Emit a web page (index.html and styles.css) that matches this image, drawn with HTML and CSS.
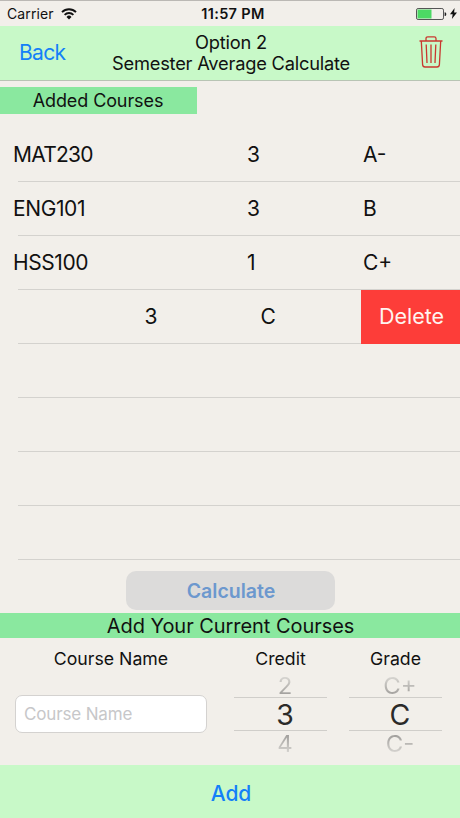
FILE: index.html
```html
<!DOCTYPE html>
<html lang="en">
<head>
<meta charset="utf-8">
<title>Semester Average Calculate</title>
<link rel="stylesheet" href="styles.css">
</head>
<body>
<div class="status">
  <div class="carrier"><span>Carrier</span>
    <svg class="wifi" viewBox="0 0 16 12"><g fill="none" stroke="#111" stroke-width="1.9"><path d="M1 4.1a10 10 0 0 1 14 0"/><path d="M3.6 6.9a6.2 6.2 0 0 1 8.8 0"/></g><path d="M8 11.5 5.5 8.9a3.5 3.5 0 0 1 5 0z" fill="#111"/></svg>
  </div>
  <div class="time">11:57 PM</div>
  <div class="power">
    <svg class="battery" viewBox="0 0 31 12"><rect x=".5" y=".5" width="27" height="11" rx="1.6" fill="none" stroke="#555"/><rect x="1.5" y="1.5" width="14" height="9" fill="#4cd964"/><path d="M28.6 4.2c2.3 0 2.3 3.8 0 3.8z" fill="#222"/></svg>
    <svg class="bolt" viewBox="0 0 7 11"><path d="M4.6 0 0 6.3h2.7L1.9 11 7 4.5H4.1z" fill="#111"/></svg>
  </div>
</div>
<header class="nav">
  <a class="back">Back</a>
  <h1 class="title"><span class="title-top">Option 2</span><span class="title-main">Semester Average Calculate</span></h1>
  <svg class="trash" viewBox="0 0 24 32" fill="none" stroke="#c9382f" stroke-width="1.3"><path d="M.5 5h23M7 5V2.6Q7 .8 8.8.8h6.4Q17 .8 17 2.600V5M2.300 5 3.600 28.600Q3.800 31 6 31h12q2.200 0 2.400-2.400L21.700 5M7.200 8.500l.8 18.500M12 8.500V27M16.800 8.500 16 27"/></svg>
</header>
<div class="badge"><span>Added Courses</span></div>
<main class="list">
  <div class="row"><span class="name wide">MAT230</span><span class="credit">3</span><span class="grade">A-</span></div>
  <div class="row"><span class="name">ENG101</span><span class="credit">3</span><span class="grade">B</span></div>
  <div class="row"><span class="name">HSS100</span><span class="credit">1</span><span class="grade">C+</span></div>
  <div class="row swiped"><span class="name"></span><span class="credit">3</span><span class="grade">C</span><button class="delete"><span>Delete</span></button></div>
  <div class="row"></div>
  <div class="row"></div>
  <div class="row"></div>
  <div class="row"></div>
</main>
<button class="calculate"><span>Calculate</span></button>
<h2 class="band"><span>Add Your Current Courses</span></h2>
<section class="form">
  <div class="field"><label>Course Name</label><div class="input"><span>Course Name</span></div></div>
  <div class="field"><label>Credit</label>
    <div class="picker"><div class="opt far up"><span>2</span></div><div class="opt sel"><span>3</span></div><div class="opt far down"><span>4</span></div></div></div>
  <div class="field"><label>Grade</label>
    <div class="picker"><div class="opt far up"><span>C+</span></div><div class="opt sel"><span>C</span></div><div class="opt far down"><span>C-</span></div></div></div>
</section>
<button class="add"><span>Add</span></button>
</body>
</html>
```
FILE: styles.css
```css
* { box-sizing: border-box; }
body {
  margin: 0;
  width: 460px;
  height: 818px;
  overflow: hidden;
  display: flex;
  flex-direction: column;
  background: #f2efea;
  color: #111;
  font-family: Inter, "Liberation Sans", sans-serif;
  font-size: 21px;
}
button { border: 0; padding: 0; font-family: inherit; }
h1, h2 { margin: 0; font-weight: 400; }
svg { display: block; }

.status {
  height: 26px;
  flex: none;
  border-top: 1px solid #bbb8b4;
  padding: 0 3px 0 7px;
  display: grid;
  grid-template-columns: 1fr auto 1fr;
  align-items: center;
  font-size: 14px;
}
.carrier { display: flex; align-items: center; gap: 7px; letter-spacing: .1px; }
.wifi { width: 16px; height: 12px; }
.time { font-weight: 600; font-size: 14.5px; letter-spacing: .35px; padding-left: 2px; }
.power { display: flex; justify-content: flex-end; align-items: center; gap: 3px; }
.battery { width: 31px; height: 12px; }
.bolt { width: 7px; height: 11px; }

.nav {
  height: 55px;
  flex: none;
  background: #c8f9c8;
  border-bottom: 1px solid #b8c4b4;
  display: grid;
  grid-template-columns: 84px 1fr 84px;
  align-items: center;
}
.back { padding: 0 0 1px 19px; color: #1480f8; font-size: 21px; letter-spacing: -.7px; }
.title { text-align: center; font-size: 18.3px; line-height: 21px; letter-spacing: -.22px; white-space: nowrap; padding-left: 2px; }
.title span { display: block; }
.trash { width: 24px; height: 32px; justify-self: end; margin-right: 17px; margin-top: -3px; }

.badge {
  flex: none;
  width: 197px;
  height: 27px;
  margin-top: 6px;
  padding-right: 1px;
  background: #8ae89f;
  display: flex;
  align-items: center;
  justify-content: center;
  font-size: 18px;
  letter-spacing: -.1px;
}
.list { flex: none; margin-top: 14px; }
.row {
  height: 54px;
  display: grid;
  grid-template-columns: 234px 116px 1fr;
  align-items: center;
  padding: 0 0 2px 13px;
  background: linear-gradient(#d4d2ce, #d4d2ce) 18px 100% / 100% 1px no-repeat;
}
.name { letter-spacing: -.4px; }
.wide { letter-spacing: -.75px; }
.swiped { grid-template-columns: 131.500px 116px 100.500px 1fr; }
.delete {
  height: 54px;
  margin-bottom: -2px;
  padding: 0 0 2px 2px;
  background: #fd3d39;
  color: #fff4f0;
  font-size: 21.5px;
}
.calculate {
  flex: none;
  align-self: center;
  width: 209px;
  height: 39px;
  margin: 11px 0 3px;
  padding: 1px 0 0 2px;
  border-radius: 10px;
  background: #dcdbda;
  color: #6c98ce;
  font-size: 19.5px;
  font-weight: 600;
}
.band {
  flex: none;
  height: 25px;
  background: #8ae89f;
  text-align: center;
  font-size: 20px;
  letter-spacing: -.05px;
  line-height: 27px;
  padding-left: 1px;
}
.form {
  flex: none;
  height: 127px;
  display: grid;
  grid-template-columns: 192px 93px 93px;
  column-gap: 22px;
  padding-left: 15px;
}
.field { text-align: center; }
.field + .field { margin: 0 -5px 0 5px; }
.field label { display: block; height: 39px; line-height: 42px; font-size: 17.7px; }
.input {
  height: 38px;
  margin-top: 18px;
  border: 1px solid #d4d2d0;
  border-radius: 7px;
  background: #fff;
  color: #c7c7c9;
  padding-left: 8px;
  display: flex;
  align-items: center;
  font-size: 17px;
  letter-spacing: -.15px;
}
.opt { display: flex; align-items: center; justify-content: center; padding-left: 9px; }
.sel { height: 34px; padding-top: 1px; border: 1px solid #d0ceca; border-width: 1px 0; font-size: 28.5px; color: #2b2a29; }
.far { height: 20px; font-size: 24px; line-height: 24px; }
.far span { display: block; transform: translateY(-1px) scaleY(.96); background: linear-gradient(#d8d6d2 10%, #a09e9b 90%); -webkit-background-clip: text; background-clip: text; color: transparent; }
.down span { transform: translateY(3px) scaleY(.96); background-image: linear-gradient(#a09e9b 10%, #d8d6d2 90%); }
.add {
  flex: 1;
  padding: 3px 0 0 2px;
  background: #c8f9c8;
  color: #1480f8;
  font-size: 21px;
  font-weight: 500;
}
```
